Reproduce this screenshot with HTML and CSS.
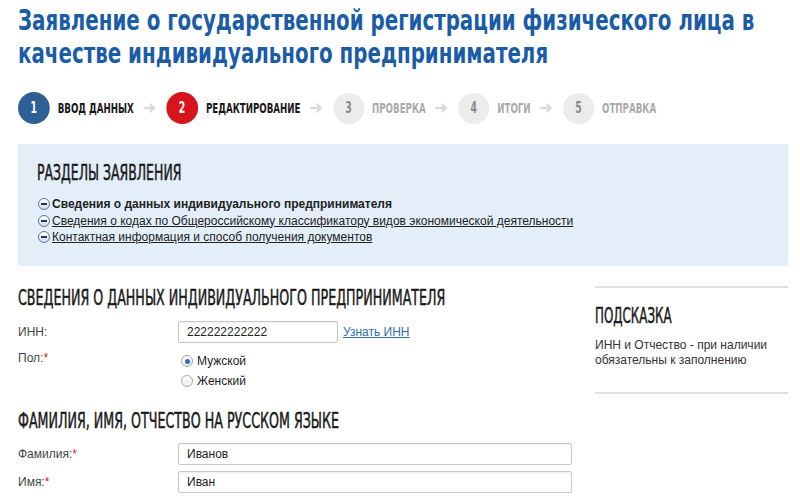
FILE: index.html
```html
<!DOCTYPE html>
<html lang="ru">
<head>
  <meta charset="UTF-8">
  <title>Заявление о государственной регистрации ИП</title>
  <link rel="stylesheet" href="styles.css">
</head>
<body>
  <div class="page">
    <h1 class="page-title">Заявление о государственной регистрации физического лица в качестве индивидуального предпринимателя</h1>

    <ol class="steps">
      <li class="step step-done"><span class="step-num">1</span><span class="step-name">Ввод данных</span></li>
      <li class="step-arrow"><svg width="20" height="12" viewBox="0 0 20 12"><path d="M1 6h15M10 2l6 4-6 4" fill="none" stroke="currentColor" stroke-width="2.6"/></svg></li>
      <li class="step step-current"><span class="step-num">2</span><span class="step-name">Редактирование</span></li>
      <li class="step-arrow"><svg width="20" height="12" viewBox="0 0 20 12"><path d="M1 6h15M10 2l6 4-6 4" fill="none" stroke="currentColor" stroke-width="2.6"/></svg></li>
      <li class="step"><span class="step-num">3</span><span class="step-name">Проверка</span></li>
      <li class="step-arrow"><svg width="20" height="12" viewBox="0 0 20 12"><path d="M1 6h15M10 2l6 4-6 4" fill="none" stroke="currentColor" stroke-width="2.6"/></svg></li>
      <li class="step"><span class="step-num">4</span><span class="step-name">Итоги</span></li>
      <li class="step-arrow"><svg width="20" height="12" viewBox="0 0 20 12"><path d="M1 6h15M10 2l6 4-6 4" fill="none" stroke="currentColor" stroke-width="2.6"/></svg></li>
      <li class="step"><span class="step-num">5</span><span class="step-name">Отправка</span></li>
    </ol>

    <div class="sections">
      <h2 class="sections-title">Разделы заявления</h2>
      <ul class="sections-list">
        <li class="section-item active"><span class="minus"></span>Сведения о данных индивидуального предпринимателя</li>
        <li class="section-item"><span class="minus"></span><a href="#">Сведения о кодах по Общероссийскому классификатору видов экономической деятельности</a></li>
        <li class="section-item"><span class="minus"></span><a href="#">Контактная информация и способ получения документов</a></li>
      </ul>
    </div>

    <div class="layout">
      <div class="main">
        <h3 class="block-title">Сведения о данных индивидуального предпринимателя</h3>
        <div class="form-row row-inn">
          <label class="form-label">ИНН:</label>
          <div class="form-field">
            <input class="input input-short" type="text" value="222222222222">
            <a class="help-link" href="#">Узнать ИНН</a>
          </div>
        </div>
        <div class="form-row row-sex">
          <label class="form-label">Пол:<span class="req">*</span></label>
          <div class="form-field radios">
            <label class="radio"><span class="radio-box checked"></span>Мужской</label>
            <label class="radio"><span class="radio-box"></span>Женский</label>
          </div>
        </div>

        <h3 class="block-title block-title-2">Фамилия, имя, отчество на русском языке</h3>
        <div class="form-row row-first">
          <label class="form-label">Фамилия:<span class="req">*</span></label>
          <div class="form-field">
            <input class="input input-wide" type="text" value="Иванов">
          </div>
        </div>
        <div class="form-row row-next">
          <label class="form-label">Имя:<span class="req">*</span></label>
          <div class="form-field">
            <input class="input input-wide" type="text" value="Иван">
          </div>
        </div>
      </div>

      <aside class="hint">
        <h4 class="hint-title">Подсказка</h4>
        <p class="hint-text">ИНН и Отчество - при наличии обязательны к заполнению</p>
      </aside>
    </div>
  </div>
</body>
</html>
```

FILE: styles.css
```css
:root {
  --blue: #1b5ca8;
  --step-blue: #2e5f95;
  --red: #d8141c;
  --panel: #e3eef9;
  --text: #222;
  --label: #444;
  --muted: #aaa;
}

* {
  margin: 0;
  padding: 0;
  box-sizing: border-box;
}

body {
  font-family: "Liberation Sans", Arial, sans-serif;
  font-size: 12px;
  color: var(--text);
  background: #fff;
  overflow-x: hidden;
}

.page {
  padding: 0 12px 0 18px;
}

/* заголовки — узкий шрифт, поджимаем по ширине */
.page-title,
.steps,
.sections-title,
.block-title,
.hint-title {
  font-family: "DejaVu Sans Condensed", "DejaVu Sans", sans-serif;
  font-stretch: condensed;
}

.page-title {
  padding-top: 4px;
  width: 131%;
  font-size: 29px;
  line-height: 33px;
  font-weight: bold;
  color: var(--blue);
  transform: scaleX(0.76);
  transform-origin: 0 0;
}

/* вся строка шагов сжата по горизонтали, кружки заданы шире */
.steps {
  list-style: none;
  display: flex;
  align-items: center;
  width: 145%;
  margin-top: 22px;
  height: 32px;
  text-transform: uppercase;
  font-size: 14px;
  font-weight: bold;
  transform: scaleX(0.69);
  transform-origin: 0 50%;
}

.step {
  display: flex;
  align-items: center;
  gap: 11.5px;
  color: var(--muted);
}

.step-num {
  width: 45px;
  height: 31px;
  border-radius: 50%;
  background: #ececec;
  color: #8a8a8a;
  display: flex;
  align-items: center;
  justify-content: center;
  font-size: 15px;
}

.step-done .step-num,
.step-current .step-num {
  width: 46px;
  height: 32px;
  color: #fff;
}

.step-done .step-num {
  background: var(--step-blue);
}

.step-current .step-num {
  background: var(--red);
}

.step-done .step-name,
.step-current .step-name {
  color: #1a1a1a;
}

.step-arrow {
  display: flex;
  color: #d9d9d9;
  margin: 0 14px 0 13px;
}

.sections {
  margin-top: 20px;
  background: var(--panel);
  padding: 17px 19px 23px;
  height: 122px;
}

.sections-title {
  width: 150%;
  font-size: 21px;
  font-weight: normal;
  text-transform: uppercase;
  color: #1a1a1a;
  line-height: 24px;
  -webkit-text-stroke: 0.5px currentColor;
  transform: scaleX(0.66);
  transform-origin: 0 0;
}

.sections-list {
  list-style: none;
  margin-top: 11px;
}

.section-item {
  display: flex;
  align-items: center;
  line-height: 16.5px;
}

.section-item.active {
  font-weight: bold;
}

.section-item a {
  color: #222;
}

.minus {
  position: relative;
  width: 12px;
  height: 12px;
  border-radius: 50%;
  border: 1px solid #5a76a8;
  background: linear-gradient(#fdfdff, #d3ddee);
  margin: 0 2px 0 1px;
  flex: none;
}

.minus::after {
  content: '';
  position: absolute;
  left: 2px;
  right: 2px;
  top: 4px;
  height: 2px;
  background: #1e3562;
}

.layout {
  display: grid;
  grid-template-columns: 554px 193px;
  gap: 23px;
  margin-top: 20px;
}

.block-title,
.hint-title {
  width: 160%;
  font-size: 22px;
  font-weight: normal;
  text-transform: uppercase;
  color: #1a1a1a;
  line-height: 24px;
  white-space: nowrap;
  -webkit-text-stroke: 0.5px currentColor;
  transform: scaleX(0.64);
  transform-origin: 0 0;
}

.block-title-2 {
  margin-top: 18px;
}

.form-row {
  display: flex;
  align-items: flex-start;
}

.row-inn {
  margin-top: 11px;
}

.row-sex {
  margin-top: 4px;
}

.row-first {
  margin-top: 10px;
}

.row-next {
  margin-top: 6px;
}

.form-label {
  width: 160px;
  flex: none;
  color: var(--label);
  line-height: 22px;
}

.req {
  color: var(--red);
}

.form-field {
  display: flex;
  align-items: center;
  gap: 5px;
}

.input {
  height: 22px;
  border: 1px solid #c9c9c9;
  border-radius: 2px;
  padding: 0 8px;
  font-family: "Liberation Sans", Arial, sans-serif;
  font-size: 12px;
  color: #222;
  box-shadow: inset 0 1px 2px rgba(0,0,0,0.08);
}

.input-short {
  width: 160px;
}

.input-wide {
  width: 394px;
}

.help-link {
  color: #2f6ea8;
}

.radios {
  flex-direction: column;
  align-items: flex-start;
  gap: 0;
  padding-top: 4px;
}

.radio {
  display: flex;
  align-items: center;
  gap: 4px;
  line-height: 20px;
  color: #222;
  padding-left: 3px;
}

.radio-box {
  position: relative;
  width: 12px;
  height: 12px;
  border-radius: 50%;
  border: 1px solid #a9a9a9;
  background: linear-gradient(#fff, #eee);
}

.radio-box.checked::after {
  content: '';
  position: absolute;
  left: 2.5px;
  top: 2.5px;
  width: 5px;
  height: 5px;
  border-radius: 50%;
  background: #2a6dd1;
}

.hint {
  border-top: 2px solid #e1e1e1;
  border-bottom: 2px solid #e1e1e1;
  padding-top: 16px;
  height: 108px;
}

.hint-title {
  width: 100%;
  transform: scaleX(0.6);
}

.hint-text {
  margin-top: 10px;
  line-height: 14.5px;
  color: #333;
}
```
